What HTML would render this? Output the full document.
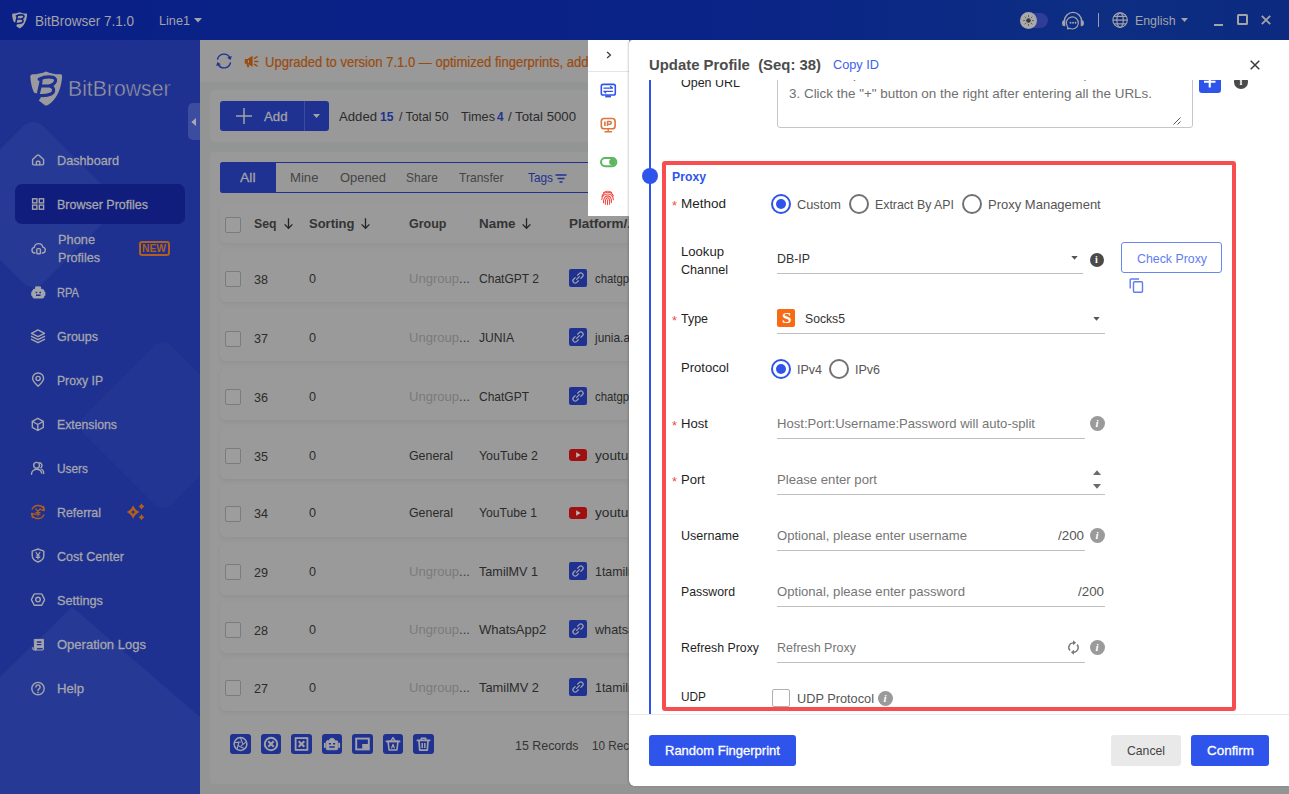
<!DOCTYPE html>
<html lang="en"><head><meta charset="utf-8"><title>BitBrowser</title>
<style>

*{box-sizing:border-box;margin:0;padding:0}
html,body{width:1289px;height:794px;overflow:hidden;background:#939494}
body{font-family:"Liberation Sans",sans-serif;font-size:13px;color:#333}
#app{position:relative;width:1289px;height:794px;overflow:hidden;background:#939494}
.a{position:absolute}
.t{position:absolute;white-space:nowrap;transform-origin:0 50%}
.layer{position:absolute;left:0;top:0;width:0;height:0}
.layer-main{z-index:1}
.layer-top{z-index:9}
.layer-drawer{z-index:5}
svg{position:absolute;overflow:visible}
.sb{-webkit-text-stroke:0.3px currentColor}
.row{position:absolute;left:220px;width:420px;height:52px;background:#9a9a9a;border-radius:6px;box-shadow:0 2px 4px rgba(0,0,0,.05)}
.cb{position:absolute;left:225px;width:16px;height:16px;border:1px solid #7b7b7b;border-radius:2px;background:#9d9d9d}
.pi{position:absolute;left:569px;width:18px;height:18px;border-radius:2px;background:#1f3292}
.tb{position:absolute;top:734px;width:21px;height:20px;border-radius:3px;background:#1f3292}
.ul{position:absolute;height:1px;background:#c0c0c0;left:777px}
.radio{position:absolute;width:20px;height:20px;border-radius:50%;border:2px solid #727272;background:#fff}
.radio.on{border-color:#2f54eb}
.radio.on:after{content:"";position:absolute;left:3px;top:3px;width:10px;height:10px;border-radius:50%;background:#2f54eb}
.info{position:absolute;width:14px;height:14px;border-radius:50%;background:#4a4a4a;color:#fff;font:bold 10px/14px "Liberation Serif",serif;text-align:center}
.info.lt{background:#9a9a9a;font-style:italic;width:15px;height:15px;line-height:15px;font-size:11px;margin:-.5px 0 0 -.5px}
.btn{position:absolute;border-radius:3px;background:#2f54eb}

</style></head>
<body>
<div id="app">

<!-- ===== title bar ===== -->
<div class="a" style="left:0;top:0;width:1289px;height:40px;background:linear-gradient(90deg,#0a2086 0%,#0a2387 55%,#0d2e83 85%,#0b2a80 100%);z-index:8"></div>
<svg viewBox="0 0 33 35" width="15.5" height="16.5" style="left:12px;top:11.5px;z-index:9"><path d="M2.400 3.200 C7 3.200 12 2.300 16.200 .4 C20.500 2.300 26 3.700 30.400 3.300 Q32.300 3.200 32.100 5.200 C31.800 12 30 20 25.600 26.600 C23.200 30 20.200 33 17.400 34.300 Q16 34.900 14.600 34 L8.800 29.600 L11 26.400 L4.400 22 C2.200 18.500 .6 12 .3 5.600 Q.2 3.300 2.400 3.200 Z" fill="#a0a0a4"/><path d="M9.200 8.200 C13 6.400 19 5.600 23 6.400 C27.400 7.600 26 13.200 19.400 14.800 C24.400 15.600 25 21.200 21 23 C17 24.800 9 24.600 3.600 23.300 M10.800 8.600 C11.400 10 11 11.400 10.600 12.800 L8.600 21.600 M10.200 15 L19.400 14.800" fill="none" stroke="#0a2086" stroke-width="3.4" stroke-linejoin="round" stroke-linecap="round"/></svg>
<svg viewBox="0 0 8 5" width="8" height="5" style="left:194px;top:18px;z-index:9"><path d="M0 0 H8 L4 4.6 Z" fill="#a3a3a8"/></svg>
<!-- toggle -->
<div class="a" style="left:1022px;top:12.5px;width:26px;height:15px;border-radius:8px;background:#2e3d95;z-index:9"></div>
<div class="a" style="left:1020px;top:11.5px;width:17px;height:17px;border-radius:50%;background:#a9a9a9;z-index:9"></div>
<svg viewBox="0 0 17 17" width="17" height="17" style="left:1020px;top:11.5px;z-index:9"><circle cx="8.5" cy="8.5" r="2.3" fill="#3a3a3a"/><g stroke="#5a5a5a" stroke-width="1" stroke-linecap="round"><path d="M8.5 3.6 v1 M8.5 12.4 v1 M3.6 8.5 h1 M12.4 8.5 h1 M5 5 l.7 .7 M11.3 11.3 l.7 .7 M12 5 l-.7 .7 M5.7 11.3 l-.7 .7"/></g></svg>
<!-- headset -->
<svg viewBox="0 0 24 20" width="24" height="20" style="left:1061px;top:10px;z-index:9"><g fill="none" stroke="#a3a3a8" stroke-width="1.4" stroke-linecap="round" stroke-linejoin="round"><path d="M3.4 11 a8.6 8.6 0 0 1 17.2 0"/><path d="M3.6 10.600 a1.800 1.800 0 0 0 -1.800 1.800 v1.400 a1.800 1.800 0 0 0 1.800 1.800 Z M20.400 10.600 a1.800 1.800 0 0 1 1.800 1.800 v1.400 a1.800 1.800 0 0 1 -1.800 1.800 Z" fill="#a3a3a8"/><path d="M7 17.8 l-.6 1 l2.2 -.5 a6 6 0 1 0 -2.400 -2.2 Z" stroke-width="1.2"/></g><g fill="#a3a3a8"><circle cx="9.500" cy="12.800" r=".95"/><circle cx="12" cy="12.800" r=".95"/><circle cx="14.500" cy="12.800" r=".95"/></g></svg>
<div class="a" style="left:1098px;top:13px;width:1px;height:14px;background:#9a9ca6;z-index:9"></div>
<!-- globe -->
<svg viewBox="0 0 17 17" width="16.200" height="16.200" style="left:1111.800px;top:11.900px;z-index:9"><g fill="none" stroke="#a3a3a8" stroke-width="1.2"><circle cx="8.5" cy="8.5" r="7.6"/><ellipse cx="8.5" cy="8.5" rx="3.4" ry="7.6"/><path d="M1 8.500 h15 M2.200 4.600 h12.600 M2.200 12.400 h12.600"/></g></svg>
<svg viewBox="0 0 8 5" width="7" height="4.5" style="left:1180.5px;top:18px;z-index:9"><path d="M0 0 H8 L4 4.6 Z" fill="#a3a3a8"/></svg>
<!-- window controls -->
<div class="a" style="left:1214px;top:24px;width:9px;height:2px;background:#a3a3a8;z-index:9"></div>
<div class="a" style="left:1236.500px;top:14px;width:11px;height:11px;border:2px solid #a3a3a8;border-radius:1.5px;z-index:9"></div>
<svg viewBox="0 0 10 10" width="10" height="10" style="left:1261px;top:15px;z-index:9"><path d="M.8 .8 L9.200 9.200 M9.200 .8 L.8 9.200" stroke="#a3a3a8" stroke-width="1.8" fill="none"/></svg>

<!-- ===== sidebar ===== -->
<div class="a" style="left:0;top:40px;width:200px;height:754px;background:#1e3191;overflow:hidden;z-index:0">
  <div class="a" style="left:-29px;top:102px;width:124.500px;height:124.500px;border-radius:14px;background:rgba(255,255,255,.04);transform:rotate(45deg)"></div>
  <div class="a" style="left:101px;top:323px;width:124px;height:124px;border-radius:12px;background:rgba(255,255,255,.025);transform:rotate(45deg)"></div>
  <svg viewBox="0 0 200 754" width="200" height="754" style="left:0;top:0"><path d="M72 567 L200 677 V754 H0 V637 Z" fill="rgba(255,255,255,.04)"/></svg>
  <div class="a" style="left:15px;top:144px;width:169.500px;height:39.500px;border-radius:7px;background:#101d7c"></div>
</div>
<!-- big logo -->
<svg viewBox="0 0 33 35" width="33" height="35" style="left:30px;top:70.5px;z-index:1"><path d="M2.400 3.200 C7 3.200 12 2.300 16.200 .4 C20.500 2.300 26 3.700 30.400 3.300 Q32.300 3.200 32.100 5.200 C31.800 12 30 20 25.600 26.600 C23.200 30 20.200 33 17.400 34.300 Q16 34.900 14.600 34 L8.800 29.600 L11 26.400 L4.400 22 C2.200 18.500 .6 12 .3 5.600 Q.2 3.300 2.400 3.200 Z" fill="#9b9b9f"/><path d="M9.200 8.200 C13 6.400 19 5.600 23 6.400 C27.400 7.600 26 13.200 19.400 14.800 C24.400 15.600 25 21.200 21 23 C17 24.800 9 24.600 3.600 23.300 M10.800 8.600 C11.400 10 11 11.400 10.600 12.800 L8.600 21.600 M10.200 15 L19.400 14.800" fill="none" stroke="#1e3191" stroke-width="3.2" stroke-linejoin="round" stroke-linecap="round"/></svg>
<!-- collapse handle -->
<div class="a" style="left:187.500px;top:103px;width:12.500px;height:36.500px;border-radius:5px 0 0 5px;background:#3c4c9f;z-index:1"></div>
<svg viewBox="0 0 5 8" width="5" height="8" style="left:191px;top:117.500px;z-index:2"><path d="M5 0 V8 L.4 4 Z" fill="#a9abb4"/></svg>
<svg viewBox="0 0 16 16" width="16" height="16" style="left:30.200px;top:152px;color:#a5a6ad;z-index:1"><g fill="none" stroke="currentColor" stroke-width="1.400" stroke-linecap="round" stroke-linejoin="round"><path d="M2.600 7.600 L7.200 3.300 Q8.100 2.500 9 3.300 L13.600 7.600 V11.800 Q13.600 12.850 12.500 12.850 H3.700 Q2.600 12.850 2.600 11.800 Z"/><path d="M6.400 12.800 V10.300 Q6.400 9.300 7.400 9.300 H8.800 Q9.800 9.300 9.800 10.300 V12.800"/></g></svg>
<svg viewBox="0 0 16 16" width="16" height="16" style="left:30.200px;top:196px;color:#a5a6ad;z-index:1"><g fill="none" stroke="currentColor" stroke-width="1.400" stroke-linecap="round" stroke-linejoin="round"><g stroke-linejoin="miter"><rect x="2.600" y="2.800" width="4.300" height="4.100"/><rect x="9.300" y="2.800" width="4.300" height="4.100"/><rect x="2.600" y="9.100" width="4.300" height="4.100"/><rect x="9.300" y="9.100" width="4.300" height="4.100"/></g></g></svg>
<svg viewBox="0 0 16 16" width="16" height="16" style="left:30.200px;top:240px;color:#a5a6ad;z-index:1"><g fill="none" stroke="currentColor" stroke-width="1.400" stroke-linecap="round" stroke-linejoin="round"><path d="M5 13 H4.800 a2.850 2.850 0 0 1 -.5 -5.650 a4.300 4.300 0 0 1 8.500 -.2 a2.950 2.950 0 0 1 -.3 5.850 H12.200"/><rect x="6.800" y="8.600" width="3.600" height="5.200" rx=".8"/></g></svg>
<svg viewBox="0 0 16 16" width="16" height="16" style="left:30.200px;top:284px;color:#a5a6ad;z-index:1"><g fill="none" stroke="currentColor" stroke-width="1.400" stroke-linecap="round" stroke-linejoin="round"><path d="M4.200 5.400 h8.200 a1.500 1.500 0 0 1 1.500 1.500 v5.600 a1.500 1.500 0 0 1 -1.500 1.500 h-8.200 a1.500 1.500 0 0 1 -1.500 -1.500 v-5.600 a1.500 1.500 0 0 1 1.500 -1.500 Z" fill="currentColor" stroke-width="1"/><path d="M6 2.900 h4.600 v2.400 h-4.600 Z" fill="currentColor" stroke-width="1"/><path d="M2 8.200 v3 M14.600 8.200 v3" stroke-width="1.500"/><path d="M5.600 8.500 h1.600 M9.400 8.500 h1.600 M6 11.300 h4.600" stroke="#1e3191" stroke-width="1.600" stroke-linecap="butt"/></g></svg>
<svg viewBox="0 0 16 16" width="16" height="16" style="left:30.200px;top:328px;color:#a5a6ad;z-index:1"><g fill="none" stroke="currentColor" stroke-width="1.400" stroke-linecap="round" stroke-linejoin="round"><path d="M8 1.900 L14.500 5.300 L8 8.700 L1.500 5.300 Z M1.500 8.300 L8 11.700 L14.500 8.300 M1.500 11.300 L8 14.700 L14.500 11.300"/></g></svg>
<svg viewBox="0 0 16 16" width="16" height="16" style="left:30.200px;top:372px;color:#a5a6ad;z-index:1"><g fill="none" stroke="currentColor" stroke-width="1.400" stroke-linecap="round" stroke-linejoin="round"><path d="M8.100 14.300 C4.600 10.900 2.600 8.900 2.600 6.500 a5.500 5.500 0 0 1 11 0 C13.600 8.900 11.600 10.900 8.100 14.300 Z"/><circle cx="8.100" cy="6.500" r="2.100"/></g></svg>
<svg viewBox="0 0 16 16" width="16" height="16" style="left:30.200px;top:416px;color:#a5a6ad;z-index:1"><g fill="none" stroke="currentColor" stroke-width="1.400" stroke-linecap="round" stroke-linejoin="round"><path d="M7.800 2.300 L13.300 5.400 V11.400 L7.800 14.500 L2.300 11.400 V5.400 Z M2.500 5.500 L7.800 8.500 L13.100 5.500 M7.800 8.500 V14.300"/></g></svg>
<svg viewBox="0 0 16 16" width="16" height="16" style="left:30.200px;top:460px;color:#a5a6ad;z-index:1"><g fill="none" stroke="currentColor" stroke-width="1.400" stroke-linecap="round" stroke-linejoin="round"><circle cx="6.600" cy="5.300" r="2.900"/><path d="M1.500 14.200 a5.200 5.200 0 0 1 10.200 -1.100 M9.800 2.700 a2.900 2.900 0 0 1 1.100 5.100 M11.700 9.300 a4.800 4.800 0 0 1 2 4.200"/></g></svg>
<svg viewBox="0 0 16 16" width="16" height="16" style="left:30.200px;top:504px;color:#b05f1e;z-index:1"><g fill="none" stroke="currentColor" stroke-width="1.400" stroke-linecap="round" stroke-linejoin="round"><path d="M14.300 6.400 A6.500 6.500 0 0 0 2.200 5 M1.700 9.600 A6.500 6.500 0 0 0 13.800 11" stroke-width="1.400"/><path d="M13.600 2.400 L14.400 6.600 L10.600 5.600 M2.400 13.600 L1.600 9.400 L5.400 10.400" stroke-width="1.200"/><path d="M5.900 4.800 L8 7.700 L10.100 4.800 M8 7.700 V11.700 M6 8.500 h4 M6 10.200 h4" stroke-width="1.200"/></g></svg>
<svg viewBox="0 0 16 16" width="16" height="16" style="left:30.200px;top:548px;color:#a5a6ad;z-index:1"><g fill="none" stroke="currentColor" stroke-width="1.400" stroke-linecap="round" stroke-linejoin="round"><path d="M8 1 L13.800 3.100 V7.600 C13.800 10.800 11.200 13 8 14 C4.800 13 2.200 10.800 2.200 7.600 V3.100 Z"/><path d="M6.100 4.500 L8 7.300 L9.900 4.500 M8 7.300 V11 M6.300 8 h3.400 M6.300 9.500 h3.400" stroke-width="1.200"/></g></svg>
<svg viewBox="0 0 16 16" width="16" height="16" style="left:30.200px;top:592px;color:#a5a6ad;z-index:1"><g fill="none" stroke="currentColor" stroke-width="1.400" stroke-linecap="round" stroke-linejoin="round"><path d="M4.900 1.900 H11.100 Q11.700 1.900 12 2.400 L14.400 7.100 Q14.600 7.600 14.400 8.100 L12 12.800 Q11.700 13.300 11.100 13.300 H4.900 Q4.300 13.300 4 12.800 L1.600 8.100 Q1.400 7.600 1.600 7.100 L4 2.400 Q4.300 1.900 4.900 1.900 Z"/><circle cx="8" cy="7.600" r="2.300"/></g></svg>
<svg viewBox="0 0 16 16" width="16" height="16" style="left:30.200px;top:636px;color:#a5a6ad;z-index:1"><g fill="none" stroke="currentColor" stroke-width="1.400" stroke-linecap="round" stroke-linejoin="round"><path d="M4.600 3.400 H13.400 V11.400 H6.600 V12.800 Q6.600 14 5.600 14 Q4.600 14 4.600 12.800 Z" fill="currentColor" stroke-width="1"/><path d="M2.900 11.600 V12.600 a1.400 1.400 0 0 0 1.400 1.400 H12 a1.400 1.400 0 0 0 1.400 -1.400 V11.400" stroke-width="1.200"/><path d="M6.800 6 h4.600 M6.800 8.600 h4.600" stroke="#1e3191" stroke-width="1.300" stroke-linecap="butt"/></g></svg>
<svg viewBox="0 0 16 16" width="16" height="16" style="left:30.200px;top:680px;color:#a5a6ad;z-index:1"><g fill="none" stroke="currentColor" stroke-width="1.400" stroke-linecap="round" stroke-linejoin="round"><circle cx="8" cy="8.600" r="6.200"/><path d="M5.900 7 a2.100 2.100 0 1 1 3.200 1.800 C8.300 9.300 8 9.700 8 10.400" stroke-width="1.400"/><path d="M8 12.300 v.3" stroke-width="1.500"/></g></svg>

<!-- NEW badge -->
<div class="a" style="left:138.500px;top:240.500px;width:31px;height:15px;border:2px solid #b05f1e;border-radius:3px;z-index:1"></div>
<!-- referral sparkle -->
<svg viewBox="0 0 20 20" width="20" height="20" style="left:125px;top:502px;z-index:1"><g fill="#b05f1e"><path d="M8.1 3.3 Q10 8.2 14.5 10.1 Q10 12 8.1 16.9 Q6.2 12 1.7 10.1 Q6.2 8.2 8.1 3.3 Z"/><path d="M16.5 1.3 Q17.3 3.7 19.5 4.5 Q17.3 5.3 16.5 7.7 Q15.7 5.3 13.5 4.5 Q15.7 3.7 16.5 1.3 Z"/><path d="M16.5 12 Q17.3 14.4 19.5 15.2 Q17.3 16 16.5 18.4 Q15.7 16 13.5 15.2 Q15.7 14.4 16.5 12 Z"/></g><circle cx="8.100" cy="10.100" r="1.500" fill="#1e3191"/></svg>

<!-- ===== main (dimmed) ===== -->
<div class="a" style="left:200px;top:40px;width:1089px;height:754px;background:#939494;z-index:0"></div>
<div class="a" style="left:200px;top:40px;width:1089px;height:41.500px;background:#999;z-index:0"></div>
<div class="a" style="left:210px;top:90px;width:1079px;height:52px;background:#999;border-radius:4px;z-index:0"></div>
<div class="a" style="left:210px;top:152px;width:1079px;height:632px;background:#999;border-radius:4px;z-index:0"></div>
<!-- refresh icon -->
<svg viewBox="0 0 18 18" width="18" height="18" style="left:215px;top:52px;z-index:1"><g fill="none" stroke="#1f3292" stroke-width="1.400" stroke-linecap="round"><path d="M2.600 7 A6.600 6.600 0 0 1 14.800 5.600"/><path d="M15.400 11 A6.600 6.600 0 0 1 3.200 12.400"/></g><path d="M16.800 4 L15.600 8 L12.200 5.800 Z M1.200 14 L2.400 10 L5.800 12.200 Z" fill="#1f3292"/></svg>
<!-- megaphone -->
<svg viewBox="0 0 15 13" width="15" height="13" style="left:244px;top:54.500px;z-index:1"><path d="M.8 4 h2.800 L8 1 Q8.600 .7 8.600 1.400 V11.200 Q8.600 11.900 8 11.600 L3.600 8.800 H.8 Z" fill="#9a4b0e"/><path d="M2.400 8.600 l.9 3.600 h1.900 l-.8 -3.600 Z" fill="#9a4b0e"/><path d="M4.400 5 v3" stroke="#999" stroke-width="1"/><path d="M10.800 6.400 h3 M10.500 3.400 l2.500 -1.500 M10.500 9.400 l2.500 1.500" stroke="#9a4b0e" stroke-width="1.500" stroke-linecap="round"/></svg>
<!-- add button -->
<div class="a" style="left:220px;top:101px;width:84px;height:30px;border-radius:3px 0 0 3px;background:#1f3292;z-index:1"></div>
<div class="a" style="left:304.500px;top:101px;width:24.500px;height:30px;border-radius:0 3px 3px 0;background:#1f3292;z-index:1"></div>
<div class="a" style="left:304px;top:101px;width:1px;height:30px;background:#3b4c9e;z-index:1"></div>
<svg viewBox="0 0 16 16" width="16" height="16" style="left:235.500px;top:108px;z-index:2"><path d="M8 0 V16 M0 8 H16" stroke="#a2a2a6" stroke-width="1.500"/></svg>
<svg viewBox="0 0 8 5" width="7" height="4.500" style="left:312.500px;top:114px;z-index:2"><path d="M0 0 H8 L4 4.600 Z" fill="#a2a2a6"/></svg>
<!-- tabs -->
<div class="a" style="left:220px;top:162px;width:1069px;height:31px;border:1px solid #1f3292;border-radius:3px 0 0 3px;z-index:1"></div>
<div class="a" style="left:220px;top:162px;width:55.500px;height:31px;border-radius:3px 0 0 3px;background:#1f3292;z-index:1"></div>
<svg viewBox="0 0 12 9" width="12" height="9" style="left:555px;top:173.500px;z-index:1"><path d="M.5 1 H11.500 M2.500 4.500 H9.500 M4.500 8 H7.500" stroke="#1f3292" stroke-width="1.300" fill="none"/></svg>
<!-- table header -->
<div class="a" style="left:220px;top:203px;width:420px;height:40px;background:#9a9a9a;border-radius:6px;box-shadow:0 2px 4px rgba(0,0,0,.045);z-index:1"></div>
<div class="cb" style="top:217px;z-index:1"></div>
<svg viewBox="0 0 9 11" width="9" height="11" style="left:283.5px;top:217.500px;z-index:2"><path d="M4.500 .3 V10.200 M.6 6.400 L4.500 10.300 L8.400 6.400" fill="none" stroke="#262626" stroke-width="1.300"/></svg>
<svg viewBox="0 0 9 11" width="9" height="11" style="left:361px;top:217.500px;z-index:2"><path d="M4.500 .3 V10.200 M.6 6.400 L4.500 10.300 L8.400 6.400" fill="none" stroke="#262626" stroke-width="1.300"/></svg>
<svg viewBox="0 0 9 11" width="9" height="11" style="left:521.5px;top:217.500px;z-index:2"><path d="M4.500 .3 V10.200 M.6 6.400 L4.500 10.300 L8.400 6.400" fill="none" stroke="#262626" stroke-width="1.300"/></svg>

<div class="a" style="left:0;top:0;z-index:1">
<div class="row" style="top:249.8px"></div>
<div class="cb" style="top:271.3px"></div>
<div class="row" style="top:309px"></div>
<div class="cb" style="top:330.5px"></div>
<div class="row" style="top:367.9px"></div>
<div class="cb" style="top:389.4px"></div>
<div class="row" style="top:426.8px"></div>
<div class="cb" style="top:448.3px"></div>
<div class="row" style="top:484.5px"></div>
<div class="cb" style="top:506px"></div>
<div class="row" style="top:542.6px"></div>
<div class="cb" style="top:564.1px"></div>
<div class="row" style="top:600.7px"></div>
<div class="cb" style="top:622.2px"></div>
<div class="row" style="top:658.8px"></div>
<div class="cb" style="top:680.3px"></div>
<div class="pi" style="top:268.8px"><svg viewBox="0 0 18 18" width="18" height="18" style="left:0;top:0"><g fill="none" stroke="#a2a2a6" stroke-width="1.25" stroke-linecap="round"><path d="M7.6 10.4 L10.4 7.6"/><path d="M8.6 6.2 L10.2 4.6 a2.2 2.2 0 0 1 3.2 3.2 L11.8 9.4"/><path d="M9.4 11.8 L7.8 13.4 a2.2 2.2 0 0 1 -3.2 -3.2 L6.2 8.6"/></g></svg></div>
<div class="pi" style="top:328px"><svg viewBox="0 0 18 18" width="18" height="18" style="left:0;top:0"><g fill="none" stroke="#a2a2a6" stroke-width="1.25" stroke-linecap="round"><path d="M7.6 10.4 L10.4 7.6"/><path d="M8.6 6.2 L10.2 4.6 a2.2 2.2 0 0 1 3.2 3.2 L11.8 9.4"/><path d="M9.4 11.8 L7.8 13.4 a2.2 2.2 0 0 1 -3.2 -3.2 L6.2 8.6"/></g></svg></div>
<div class="pi" style="top:386.9px"><svg viewBox="0 0 18 18" width="18" height="18" style="left:0;top:0"><g fill="none" stroke="#a2a2a6" stroke-width="1.25" stroke-linecap="round"><path d="M7.6 10.4 L10.4 7.6"/><path d="M8.6 6.2 L10.2 4.6 a2.2 2.2 0 0 1 3.2 3.2 L11.8 9.4"/><path d="M9.4 11.8 L7.8 13.4 a2.2 2.2 0 0 1 -3.2 -3.2 L6.2 8.6"/></g></svg></div>
<div class="a" style="left:569px;top:448.8px;width:18px;height:12.5px;border-radius:3px;background:#a01010"><svg viewBox="0 0 18 12" width="18" height="12" style="left:0;top:0"><path d="M7.2 3.2 L11.6 6 L7.2 8.8 Z" fill="#b9b9b9"/></svg></div>
<div class="a" style="left:569px;top:506.5px;width:18px;height:12.5px;border-radius:3px;background:#a01010"><svg viewBox="0 0 18 12" width="18" height="12" style="left:0;top:0"><path d="M7.2 3.2 L11.6 6 L7.2 8.8 Z" fill="#b9b9b9"/></svg></div>
<div class="pi" style="top:561.6px"><svg viewBox="0 0 18 18" width="18" height="18" style="left:0;top:0"><g fill="none" stroke="#a2a2a6" stroke-width="1.25" stroke-linecap="round"><path d="M7.6 10.4 L10.4 7.6"/><path d="M8.6 6.2 L10.2 4.6 a2.2 2.2 0 0 1 3.2 3.2 L11.8 9.4"/><path d="M9.4 11.8 L7.8 13.4 a2.2 2.2 0 0 1 -3.2 -3.2 L6.2 8.6"/></g></svg></div>
<div class="pi" style="top:619.7px"><svg viewBox="0 0 18 18" width="18" height="18" style="left:0;top:0"><g fill="none" stroke="#a2a2a6" stroke-width="1.25" stroke-linecap="round"><path d="M7.6 10.4 L10.4 7.6"/><path d="M8.6 6.2 L10.2 4.6 a2.2 2.2 0 0 1 3.2 3.2 L11.8 9.4"/><path d="M9.4 11.8 L7.8 13.4 a2.2 2.2 0 0 1 -3.2 -3.2 L6.2 8.6"/></g></svg></div>
<div class="pi" style="top:677.8px"><svg viewBox="0 0 18 18" width="18" height="18" style="left:0;top:0"><g fill="none" stroke="#a2a2a6" stroke-width="1.25" stroke-linecap="round"><path d="M7.6 10.4 L10.4 7.6"/><path d="M8.6 6.2 L10.2 4.6 a2.2 2.2 0 0 1 3.2 3.2 L11.8 9.4"/><path d="M9.4 11.8 L7.8 13.4 a2.2 2.2 0 0 1 -3.2 -3.2 L6.2 8.6"/></g></svg></div>
<div class="tb" style="left:230px;width:21px"><svg viewBox="0 0 21 20" width="21" height="20" style="left:0;top:0"><g fill="none" stroke="#a2a2a6" stroke-width="1.500" stroke-linecap="round" stroke-linejoin="round"><circle cx="10.500" cy="10" r="6.400"/><path d="M10.500 3.600 L12.600 9.400 M16.500 7.600 L11.400 11.600 M14.600 14.800 L8.800 12 M7 15.200 L8.600 9.200 M4.300 8.600 L10.400 8"  stroke-width="1.200"/></g></svg></div>
<div class="tb" style="left:260.5px;width:20px"><svg viewBox="0 0 20 20" width="20" height="20" style="left:0;top:0"><g fill="none" stroke="#a2a2a6" stroke-width="1.500" stroke-linecap="round" stroke-linejoin="round"><circle cx="10" cy="10" r="6.200" stroke-width="2"/><path d="M7.300 7.300 L12.700 12.700 M12.700 7.300 L7.300 12.700" stroke-width="2.200" stroke-linecap="butt"/></g></svg></div>
<div class="tb" style="left:291px;width:21px"><svg viewBox="0 0 21 20" width="21" height="20" style="left:0;top:0"><g fill="none" stroke="#a2a2a6" stroke-width="1.500" stroke-linecap="round" stroke-linejoin="round"><rect x="4.600" y="4.100" width="11.800" height="11.800" stroke-width="1.800" stroke-linejoin="miter"/><path d="M7.700 7.200 L13.300 12.800 M13.300 7.200 L7.700 12.800" stroke-width="2.100" stroke-linecap="butt"/></g></svg></div>
<div class="tb" style="left:321.5px;width:20px"><svg viewBox="0 0 20 20" width="20" height="20" style="left:0;top:0"><g fill="none" stroke="#a2a2a6" stroke-width="1.500" stroke-linecap="round" stroke-linejoin="round"><path d="M5.400 6.800 h9.200 a1.200 1.200 0 0 1 1.200 1.200 v6.600 a1.200 1.200 0 0 1 -1.200 1.200 h-9.200 a1.200 1.200 0 0 1 -1.200 -1.200 v-6.600 a1.200 1.200 0 0 1 1.200 -1.200 Z" fill="#a2a2a6" stroke-width=".8"/><path d="M7.200 7 a2.800 2.800 0 0 1 5.600 0 Z" fill="#a2a2a6" stroke-width=".8"/><path d="M2.800 9.600 v3.400 M17.200 9.600 v3.400" stroke-width="1.800"/><path d="M6.800 9.800 h2.200 M11 9.800 h2.200 M7.200 13 h5.600" stroke="#1f3292" stroke-width="1.500" stroke-linecap="butt"/></g></svg></div>
<div class="tb" style="left:352px;width:21px"><svg viewBox="0 0 21 20" width="21" height="20" style="left:0;top:0"><g fill="none" stroke="#a2a2a6" stroke-width="1.500" stroke-linecap="round" stroke-linejoin="round"><rect x="4.200" y="4.600" width="12.600" height="10.800" stroke-width="1.900" stroke-linejoin="miter"/><rect x="10.200" y="10" width="6" height="4.800" fill="#a2a2a6" stroke="none"/></g></svg></div>
<div class="tb" style="left:382.5px;width:20px"><svg viewBox="0 0 20 20" width="20" height="20" style="left:0;top:0"><g fill="none" stroke="#a2a2a6" stroke-width="1.500" stroke-linecap="round" stroke-linejoin="round"><path d="M5 7.400 h10 l-1.100 8.600 h-7.800 Z" stroke-width="1.600"/><path d="M3.400 7.400 h13.200" stroke-width="1.700"/><path d="M7.600 7.400 L10 3.600 L12.400 7.400" stroke-width="1.400"/><path d="M8.600 14 L10 10.200 L11.400 14 M9.100 12.800 h1.800" stroke-width="1.100"/></g></svg></div>
<div class="tb" style="left:413px;width:21px"><svg viewBox="0 0 21 20" width="21" height="20" style="left:0;top:0"><g fill="none" stroke="#a2a2a6" stroke-width="1.500" stroke-linecap="round" stroke-linejoin="round"><path d="M4.400 6.400 h12.200" stroke-width="1.800"/><path d="M8.300 6.200 v-2 h4.400 v2" stroke-width="1.500"/><path d="M6 6.600 l.7 9.600 h7.600 l.7 -9.600" stroke-width="1.700"/><path d="M9.200 9 v5 M11.800 9 v5" stroke-width="1.500" stroke-linecap="butt"/></g></svg></div>

</div>

<!-- ===== floating tool panel ===== -->
<div class="a" style="left:588px;top:40px;width:40.500px;height:176px;background:#fff;z-index:3"></div>
<div class="a" style="left:588px;top:70.500px;width:40.500px;height:1px;background:#e4e4e4;z-index:3"></div>
<svg viewBox="0 0 8 10" width="6" height="8" style="left:605.500px;top:51px;z-index:4"><path d="M1.500 1 L6 5 L1.500 9" fill="none" stroke="#333" stroke-width="1.500"/></svg>
<svg viewBox="0 0 17 15" width="17" height="15" style="left:600px;top:82.500px;z-index:4"><rect x="1.300" y="1.400" width="14" height="10.600" rx="1.800" fill="none" stroke="#2f54eb" stroke-width="1.600"/><path d="M5.200 12.400 h5.800 v2 h-5.800 Z" fill="#2f54eb"/><path d="M3.900 5.100 h8.600 M10.600 3.500 l1.900 1.600 M12.500 8.300 h-8.600 M5.800 9.900 l-1.900 -1.600" fill="none" stroke="#2f54eb" stroke-width="1.300" stroke-linecap="round"/></svg>
<svg viewBox="0 0 17 16" width="17" height="16" style="left:600px;top:117.200px;z-index:4"><g fill="none" stroke="#da763f" stroke-linejoin="round"><rect x="1.300" y="1.500" width="13.800" height="10.200" rx="2.800" stroke-width="1.600"/><path d="M8.200 11.800 v2.600 M5 14.700 h6.500" stroke-width="1.400" stroke-linecap="round"/><path d="M4.900 4.400 v4.600" stroke-width="1.600"/><path d="M7.500 9 V4.400 h2.300 a1.450 1.450 0 0 1 0 2.900 h-2.300" stroke-width="1.500"/></g></svg>
<svg viewBox="0 0 17.400 10.200" width="17.400" height="10.200" style="left:599.500px;top:156.600px;z-index:4"><rect x="1" y="1" width="15.400" height="8.200" rx="4.100" fill="none" stroke="#5db761" stroke-width="2"/><circle cx="12.500" cy="5.100" r="3.300" fill="#5db761"/></svg>
<svg viewBox="0 0 16 16" width="15.500" height="16" style="left:600.400px;top:189.800px;z-index:4"><g fill="none" stroke="#f2453d" stroke-width="1.100" stroke-linecap="round"><path d="M2 6.500 A6.300 6.300 0 0 1 13.800 5.800"/><path d="M1.800 9.500 C2.200 5.500 4.800 3.800 8 3.800 C11.200 3.800 13.600 6 13.800 9.800"/><path d="M3.600 13 C3.400 9 4.800 5.800 8 5.800 C11 5.800 12 8.500 11.800 12.500"/><path d="M5.600 14.500 C5.200 11 5.800 7.800 8 7.800 C10 7.800 10.200 11 9.800 14.500"/><path d="M7.800 15 C7.600 13 7.600 11 8 9.800"/><path d="M3.500 2.800 A6.500 6.500 0 0 1 12 2.400"/></g></svg>

<!-- ===== drawer ===== -->
<div class="a" style="left:629px;top:40px;width:660px;height:746px;background:#fff;border-radius:4px 0 0 6px;box-shadow:-1px 0 2px rgba(0,0,0,.18);z-index:4"></div>
<!-- scroll content (clipped 80..714) -->
<div class="a" style="left:629px;top:80px;width:660px;height:634px;overflow:hidden;z-index:5">
 <div class="a" style="left:-629px;top:-80px;width:1289px;height:794px">
  <div class="a" style="left:649px;top:60px;width:2px;height:700px;background:#2f54eb"></div>
  <div class="a" style="left:642px;top:168px;width:16px;height:16px;border-radius:50%;background:#2f54eb"></div>
  <!-- textarea -->
  <div class="a" style="left:776.500px;top:40px;width:416.500px;height:87.500px;border:1px solid #c6c6c6;border-radius:3px;background:#fff"></div>
  <svg viewBox="0 0 8 8" width="8" height="8" style="left:1173px;top:117px"><path d="M7.500 .5 L.5 7.500 M7.500 4.500 L4.500 7.500" stroke="#555" stroke-width="1" fill="none"/></svg>
  <div class="btn" style="left:1199px;top:70px;width:22px;height:23px"></div>
  <svg viewBox="0 0 12 12" width="11.500" height="11.500" style="left:1204px;top:76px"><path d="M6 0 V12 M0 6 H12" stroke="#fff" stroke-width="2.200"/></svg>
  <div class="info" style="left:1234px;top:74.5px">i</div>

  <!-- red highlight box -->
  <div class="a" style="left:662px;top:161px;width:574px;height:549.500px;border:4px solid #f84d4f;border-radius:3px"></div>
  <!-- method radios -->
  <div class="radio on" style="left:771px;top:194px"></div>
  <div class="radio" style="left:849px;top:194px"></div>
  <div class="radio" style="left:962px;top:194px"></div>
  <!-- lookup channel -->
  <div class="ul" style="top:273px;width:306px"></div>
  <svg viewBox="0 0 8 5" width="7" height="4" style="left:1070.500px;top:256px"><path d="M0 0 H8 L4 4.600 Z" fill="#555"/></svg>
  <div class="info" style="left:1089.5px;top:253px">i</div>

  <div class="a" style="left:1121px;top:242px;width:101px;height:31px;border:1px solid #6a86f1;border-radius:3px;background:#fff"></div>
  <svg viewBox="0 0 15 15" width="15" height="15" style="left:1128.500px;top:277.500px"><g fill="none" stroke="#5f7df0" stroke-width="1.400" stroke-linejoin="round"><rect x="4.500" y="3.800" width="9" height="10.500" rx="1"/><path d="M1.200 10.500 V2 a1 1 0 0 1 1 -1 H10"/></g></svg>
  <!-- type -->
  <div class="a" style="left:777px;top:309px;width:18px;height:18px;border-radius:2px;background:#f76b14"></div>
  <div class="ul" style="top:333px;width:328px"></div>
  <svg viewBox="0 0 8 5" width="7" height="4" style="left:1092.500px;top:316.500px"><path d="M0 0 H8 L4 4.600 Z" fill="#555"/></svg>
  <!-- protocol radios -->
  <div class="radio on" style="left:771px;top:359px"></div>
  <div class="radio" style="left:829px;top:359px"></div>
  <!-- host -->
  <div class="ul" style="top:438px;width:308px"></div>
  <div class="info lt" style="left:1090px;top:416px">i</div>

  <!-- port -->
  <div class="ul" style="top:494px;width:328px"></div>
  <svg viewBox="0 0 8 5" width="8" height="5" style="left:1093px;top:469.500px"><path d="M0 5 H8 L4 .2 Z" fill="#6a6a6a"/></svg>
  <svg viewBox="0 0 8 5" width="8" height="5" style="left:1093px;top:483.500px"><path d="M0 0 H8 L4 4.800 Z" fill="#6a6a6a"/></svg>
  <!-- username -->
  <div class="ul" style="top:550px;width:308px"></div>
  <div class="info lt" style="left:1090px;top:528px">i</div>

  <!-- password -->
  <div class="ul" style="top:606px;width:328px"></div>
  <!-- refresh proxy -->
  <div class="ul" style="top:662px;width:308px"></div>
  <svg viewBox="0 0 14 16" width="13" height="15" style="left:1066.500px;top:639.500px"><g fill="none" stroke="#777" stroke-width="1.500"><path d="M7 3 A5 5 0 0 0 3.200 11.300"/><path d="M7 13 A5 5 0 0 0 10.800 4.700"/></g><path d="M6.500 .3 L9.800 3 L6.500 5.700 Z M7.500 10.300 L4.200 13 L7.500 15.700 Z" fill="#777"/></svg>
  <div class="info lt" style="left:1090px;top:640px">i</div>

  <!-- udp -->
  <div class="a" style="left:772px;top:689px;width:18px;height:18px;border:1px solid #b0b0b0;border-radius:2px;background:#fff"></div>
  <div class="info lt" style="left:878px;top:691px">i</div>

 </div>
</div>
<!-- header/footer covers (clip the scroll area) -->
<div class="a" style="left:633px;top:40px;width:656px;height:40px;background:#fff;z-index:6"></div>
<div class="a" style="left:629px;top:44px;width:10px;height:36px;background:#fff;z-index:6"></div>
<div class="a" style="left:633px;top:714px;width:656px;height:71.500px;background:#fff;z-index:6"></div>
<div class="a" style="left:629px;top:714px;width:10px;height:66px;background:#fff;z-index:6"></div>
<!-- header close -->
<svg viewBox="0 0 10 10" width="10" height="10" style="left:1249.500px;top:60px;z-index:6"><path d="M.7 .7 L9.300 9.300 M9.300 .7 L.7 9.300" stroke="#3a3a3a" stroke-width="1.500" fill="none"/></svg>
<!-- footer -->
<div class="a" style="left:629px;top:714px;width:660px;height:1px;background:#e9e9e9;z-index:6"></div>
<div class="btn" style="left:649px;top:735px;width:147px;height:31px;z-index:6"></div>
<div class="btn" style="left:1111px;top:735px;width:70px;height:31px;background:#e9e9e9;z-index:6"></div>
<div class="btn" style="left:1191px;top:735px;width:78px;height:31px;z-index:6"></div>
<div class="layer layer-main">
<span class="t" id="t3" style="left:67.8px;top:74px;font-size:21.6px;line-height:30px;color:#9b9b9f;-webkit-text-stroke:.45px #1e3191;transform:scaleX(0.9827);">BitBrowser</span>
<span class="t" id="t4" style="left:57px;top:150.7px;font-size:13px;line-height:20px;color:#a5a6ad;-webkit-text-stroke:.3px #a5a6ad;transform:scaleX(0.9747);">Dashboard</span>
<span class="t" id="t5" style="left:57px;top:194.7px;font-size:13px;line-height:20px;color:#a5a6ad;-webkit-text-stroke:.3px #a5a6ad;transform:scaleX(0.9615);">Browser Profiles</span>
<span class="t" id="t6" style="left:58px;top:230.2px;font-size:13px;line-height:20px;color:#a5a6ad;-webkit-text-stroke:.3px #a5a6ad;transform:scaleX(0.9842);">Phone</span>
<span class="t" id="t7" style="left:58px;top:248.2px;font-size:13px;line-height:20px;color:#a5a6ad;-webkit-text-stroke:.3px #a5a6ad;transform:scaleX(0.9686);">Profiles</span>
<span class="t" id="t8" style="left:142px;top:238.7px;font-size:10px;line-height:20px;color:#b05f1e;font-weight:bold;transform:scaleX(1.0281);">NEW</span>
<span class="t" id="t9" style="left:57px;top:282.7px;font-size:13px;line-height:20px;color:#a5a6ad;-webkit-text-stroke:.3px #a5a6ad;transform:scaleX(0.8539);">RPA</span>
<span class="t" id="t10" style="left:57px;top:326.7px;font-size:13px;line-height:20px;color:#a5a6ad;-webkit-text-stroke:.3px #a5a6ad;transform:scaleX(0.9615);">Groups</span>
<span class="t" id="t11" style="left:57px;top:370.7px;font-size:13px;line-height:20px;color:#a5a6ad;-webkit-text-stroke:.3px #a5a6ad;transform:scaleX(0.9364);">Proxy IP</span>
<span class="t" id="t12" style="left:57px;top:414.7px;font-size:13px;line-height:20px;color:#a5a6ad;-webkit-text-stroke:.3px #a5a6ad;transform:scaleX(0.9435);">Extensions</span>
<span class="t" id="t13" style="left:57px;top:458.7px;font-size:13px;line-height:20px;color:#a5a6ad;-webkit-text-stroke:.3px #a5a6ad;transform:scaleX(0.9130);">Users</span>
<span class="t" id="t14" style="left:57px;top:502.7px;font-size:13px;line-height:20px;color:#a5a6ad;-webkit-text-stroke:.3px #a5a6ad;transform:scaleX(0.9514);">Referral</span>
<span class="t" id="t15" style="left:57px;top:546.7px;font-size:13px;line-height:20px;color:#a5a6ad;-webkit-text-stroke:.3px #a5a6ad;transform:scaleX(0.9658);">Cost Center</span>
<span class="t" id="t16" style="left:57px;top:590.7px;font-size:13px;line-height:20px;color:#a5a6ad;-webkit-text-stroke:.3px #a5a6ad;transform:scaleX(0.9790);">Settings</span>
<span class="t" id="t17" style="left:57px;top:634.7px;font-size:13px;line-height:20px;color:#a5a6ad;-webkit-text-stroke:.3px #a5a6ad;">Operation Logs</span>
<span class="t" id="t18" style="left:57px;top:678.7px;font-size:13px;line-height:20px;color:#a5a6ad;-webkit-text-stroke:.3px #a5a6ad;transform:scaleX(1.0093);">Help</span>
<span class="t" id="t19" style="left:264.5px;top:51.7px;font-size:14px;line-height:20px;color:#9a4b0e;-webkit-text-stroke:.2px #9a4b0e;transform:scaleX(0.9320);">Upgraded to version 7.1.0 — optimized fingerprints, added cloud phone profiles and fixed known issues</span>
<span class="t" id="t20" style="left:263.5px;top:106.7px;font-size:13px;line-height:20px;color:#a2a2a6;-webkit-text-stroke:.3px #a2a2a6;transform:scaleX(1.0155);">Add</span>
<span class="t" id="t21" style="left:339px;top:106.7px;font-size:13.5px;line-height:20px;color:#2b2b2b;transform:scaleX(0.9732);">Added</span>
<span class="t" id="t22" style="left:380px;top:106.7px;font-size:13.5px;line-height:20px;color:#1f3292;font-weight:bold;transform:scaleX(0.8981);">15</span>
<span class="t" id="t23" style="left:398.5px;top:106.7px;font-size:13.5px;line-height:20px;color:#2b2b2b;transform:scaleX(0.9075);">/ Total 50</span>
<span class="t" id="t24" style="left:461px;top:106.7px;font-size:13.5px;line-height:20px;color:#2b2b2b;transform:scaleX(0.9379);">Times</span>
<span class="t" id="t25" style="left:497px;top:106.7px;font-size:13.5px;line-height:20px;color:#1f3292;font-weight:bold;transform:scaleX(0.8649);">4</span>
<span class="t" id="t26" style="left:508px;top:106.7px;font-size:13.5px;line-height:20px;color:#2b2b2b;transform:scaleX(0.9775);">/ Total 5000</span>
<span class="t" id="t27" style="left:240px;top:168.2px;font-size:13px;line-height:20px;color:#a2a2a6;-webkit-text-stroke:.3px #a2a2a6;transform:scaleX(1.0724);">All</span>
<span class="t" id="t28" style="left:290px;top:168.2px;font-size:13px;line-height:20px;color:#454545;transform:scaleX(1.0111);">Mine</span>
<span class="t" id="t29" style="left:340px;top:168.2px;font-size:13px;line-height:20px;color:#454545;transform:scaleX(0.9943);">Opened</span>
<span class="t" id="t30" style="left:406px;top:168.2px;font-size:13px;line-height:20px;color:#454545;transform:scaleX(0.9221);">Share</span>
<span class="t" id="t31" style="left:458.5px;top:168.2px;font-size:13px;line-height:20px;color:#454545;transform:scaleX(0.9286);">Transfer</span>
<span class="t" id="t32" style="left:527.5px;top:168.2px;font-size:13px;line-height:20px;color:#1f3292;transform:scaleX(0.9101);">Tags</span>
<span class="t" id="t33" style="left:254px;top:214.2px;font-size:13.5px;line-height:20px;color:#343434;font-weight:bold;transform:scaleX(0.9085);">Seq</span>
<span class="t" id="t34" style="left:308.5px;top:214.2px;font-size:13.5px;line-height:20px;color:#343434;font-weight:bold;transform:scaleX(0.9630);">Sorting</span>
<span class="t" id="t35" style="left:409px;top:214.2px;font-size:13.5px;line-height:20px;color:#343434;font-weight:bold;transform:scaleX(0.9259);">Group</span>
<span class="t" id="t36" style="left:479px;top:214.2px;font-size:13.5px;line-height:20px;color:#343434;font-weight:bold;transform:scaleX(0.9924);">Name</span>
<span class="t" id="t37" style="left:569px;top:214.2px;font-size:13.5px;line-height:20px;color:#343434;font-weight:bold;transform:scaleX(0.9957);">Platform/...</span>
<span class="t" id="t38" style="left:514.5px;top:736.2px;font-size:13.5px;line-height:20px;color:#343434;transform:scaleX(0.9197);">15 Records</span>
<span class="t" id="t39" style="left:592px;top:736.2px;font-size:13.5px;line-height:20px;color:#343434;transform:scaleX(0.8649);">10 Records/Page</span>
<span class="t" id="t40" style="left:254px;top:269.7px;font-size:13px;line-height:20px;color:#2b2b2b;transform:scaleX(0.9676);">38</span>
<span class="t" id="t41" style="left:309px;top:268.7px;font-size:13px;line-height:20px;color:#2b2b2b;transform:scaleX(0.9676);">0</span>
<span class="t" id="t42" style="left:409px;top:268.7px;font-size:13px;line-height:20px;color:#7a7a7a;transform:scaleX(1.0046);">Ungroup<span style="color:#3c3c3c">...</span></span>
<span class="t" id="t43" style="left:479px;top:268.7px;font-size:13px;line-height:20px;color:#2b2b2b;transform:scaleX(0.9260);">ChatGPT 2</span>
<span class="t" id="t44" style="left:595px;top:268.7px;font-size:13px;line-height:20px;color:#2b2b2b;transform:scaleX(0.8707);">chatgpt.com</span>
<span class="t" id="t45" style="left:254px;top:328.9px;font-size:13px;line-height:20px;color:#2b2b2b;transform:scaleX(0.9676);">37</span>
<span class="t" id="t46" style="left:309px;top:327.9px;font-size:13px;line-height:20px;color:#2b2b2b;transform:scaleX(0.9676);">0</span>
<span class="t" id="t47" style="left:409px;top:327.9px;font-size:13px;line-height:20px;color:#7a7a7a;transform:scaleX(1.0046);">Ungroup<span style="color:#3c3c3c">...</span></span>
<span class="t" id="t48" style="left:479px;top:327.9px;font-size:13px;line-height:20px;color:#2b2b2b;transform:scaleX(0.9318);">JUNIA</span>
<span class="t" id="t49" style="left:595px;top:327.9px;font-size:13px;line-height:20px;color:#2b2b2b;transform:scaleX(0.9135);">junia.ai</span>
<span class="t" id="t50" style="left:254px;top:387.8px;font-size:13px;line-height:20px;color:#2b2b2b;transform:scaleX(0.9676);">36</span>
<span class="t" id="t51" style="left:309px;top:386.8px;font-size:13px;line-height:20px;color:#2b2b2b;transform:scaleX(0.9676);">0</span>
<span class="t" id="t52" style="left:409px;top:386.8px;font-size:13px;line-height:20px;color:#7a7a7a;transform:scaleX(1.0046);">Ungroup<span style="color:#3c3c3c">...</span></span>
<span class="t" id="t53" style="left:479px;top:386.8px;font-size:13px;line-height:20px;color:#2b2b2b;transform:scaleX(0.9227);">ChatGPT</span>
<span class="t" id="t54" style="left:595px;top:386.8px;font-size:13px;line-height:20px;color:#2b2b2b;transform:scaleX(0.8707);">chatgpt.com</span>
<span class="t" id="t55" style="left:254px;top:446.7px;font-size:13px;line-height:20px;color:#2b2b2b;transform:scaleX(0.9676);">35</span>
<span class="t" id="t56" style="left:309px;top:445.7px;font-size:13px;line-height:20px;color:#2b2b2b;transform:scaleX(0.9676);">0</span>
<span class="t" id="t57" style="left:409px;top:445.7px;font-size:13px;line-height:20px;color:#2b2b2b;transform:scaleX(0.9514);">General</span>
<span class="t" id="t58" style="left:479px;top:445.7px;font-size:13px;line-height:20px;color:#2b2b2b;transform:scaleX(0.9526);">YouTube 2</span>
<span class="t" id="t59" style="left:595px;top:445.7px;font-size:13px;line-height:20px;color:#2b2b2b;transform:scaleX(1.0530);">youtube.com</span>
<span class="t" id="t60" style="left:254px;top:504.4px;font-size:13px;line-height:20px;color:#2b2b2b;transform:scaleX(0.9676);">34</span>
<span class="t" id="t61" style="left:309px;top:503.4px;font-size:13px;line-height:20px;color:#2b2b2b;transform:scaleX(0.9676);">0</span>
<span class="t" id="t62" style="left:409px;top:503.4px;font-size:13px;line-height:20px;color:#2b2b2b;transform:scaleX(0.9514);">General</span>
<span class="t" id="t63" style="left:479px;top:503.4px;font-size:13px;line-height:20px;color:#2b2b2b;transform:scaleX(0.9364);">YouTube 1</span>
<span class="t" id="t64" style="left:595px;top:503.4px;font-size:13px;line-height:20px;color:#2b2b2b;transform:scaleX(1.0530);">youtube.com</span>
<span class="t" id="t65" style="left:254px;top:562.5px;font-size:13px;line-height:20px;color:#2b2b2b;transform:scaleX(0.9676);">29</span>
<span class="t" id="t66" style="left:309px;top:561.5px;font-size:13px;line-height:20px;color:#2b2b2b;transform:scaleX(0.9676);">0</span>
<span class="t" id="t67" style="left:409px;top:561.5px;font-size:13px;line-height:20px;color:#7a7a7a;transform:scaleX(1.0046);">Ungroup<span style="color:#3c3c3c">...</span></span>
<span class="t" id="t68" style="left:479px;top:561.5px;font-size:13px;line-height:20px;color:#2b2b2b;transform:scaleX(0.9722);">TamilMV 1</span>
<span class="t" id="t69" style="left:595px;top:561.5px;font-size:13px;line-height:20px;color:#2b2b2b;transform:scaleX(0.9514);">1tamilmv.com</span>
<span class="t" id="t70" style="left:254px;top:620.6px;font-size:13px;line-height:20px;color:#2b2b2b;transform:scaleX(0.9676);">28</span>
<span class="t" id="t71" style="left:309px;top:619.6px;font-size:13px;line-height:20px;color:#2b2b2b;transform:scaleX(0.9676);">0</span>
<span class="t" id="t72" style="left:409px;top:619.6px;font-size:13px;line-height:20px;color:#7a7a7a;transform:scaleX(1.0046);">Ungroup<span style="color:#3c3c3c">...</span></span>
<span class="t" id="t73" style="left:479px;top:619.6px;font-size:13px;line-height:20px;color:#2b2b2b;">WhatsApp2</span>
<span class="t" id="t74" style="left:595px;top:619.6px;font-size:13px;line-height:20px;color:#2b2b2b;transform:scaleX(0.9715);">whatsapp.com</span>
<span class="t" id="t75" style="left:254px;top:678.7px;font-size:13px;line-height:20px;color:#2b2b2b;transform:scaleX(0.9676);">27</span>
<span class="t" id="t76" style="left:309px;top:677.7px;font-size:13px;line-height:20px;color:#2b2b2b;transform:scaleX(0.9676);">0</span>
<span class="t" id="t77" style="left:409px;top:677.7px;font-size:13px;line-height:20px;color:#7a7a7a;transform:scaleX(1.0046);">Ungroup<span style="color:#3c3c3c">...</span></span>
<span class="t" id="t78" style="left:479px;top:677.7px;font-size:13px;line-height:20px;color:#2b2b2b;transform:scaleX(0.9887);">TamilMV 2</span>
<span class="t" id="t79" style="left:595px;top:677.7px;font-size:13px;line-height:20px;color:#2b2b2b;transform:scaleX(0.9514);">1tamilmv.com</span>
</div>
<div class="layer layer-top">
<span class="t" id="t0" style="left:35px;top:10.7px;font-size:14px;line-height:20px;color:#a3a3a8;transform:scaleX(0.9638);">BitBrowser 7.1.0</span>
<span class="t" id="t1" style="left:159px;top:10.7px;font-size:13px;line-height:20px;color:#a3a3a8;transform:scaleX(0.9745);">Line1</span>
<span class="t" id="t2" style="left:1135px;top:10.7px;font-size:13px;line-height:20px;color:#a3a3a8;transform:scaleX(0.9498);">English</span>
<span class="t" id="t80" style="left:649px;top:54.7px;font-size:15px;line-height:20px;color:#4d4d4d;font-weight:bold;white-space:pre;transform:scaleX(0.9921);">Update Profile  (Seq: 38)</span>
<span class="t" id="t81" style="left:833px;top:55.2px;font-size:13px;line-height:20px;color:#3d62ee;transform:scaleX(0.9794);">Copy ID</span>
<span class="t" id="t118" style="left:665px;top:741.2px;font-size:13px;line-height:20px;color:#fff;-webkit-text-stroke:.3px #fff;">Random Fingerprint</span>
<span class="t" id="t119" style="left:1127px;top:741.2px;font-size:13px;line-height:20px;color:#444;transform:scaleX(0.9390);">Cancel</span>
<span class="t" id="t120" style="left:1206.5px;top:741.2px;font-size:13px;line-height:20px;color:#fff;-webkit-text-stroke:.3px #fff;transform:scaleX(1.0326);">Confirm</span>
</div>
<div class="layer layer-drawer">
<span class="t" id="t82" style="left:681px;top:72.7px;font-size:13px;line-height:20px;color:#1f1f1f;transform:scaleX(0.9606);">Open URL</span>
<span class="t" id="t83" style="left:785px;top:63.8px;font-size:13px;line-height:20px;color:#707070;">2. Add multiple URLs, one on each line and all will open at once.</span>
<span class="t" id="t84" style="left:789px;top:84.2px;font-size:13px;line-height:20px;color:#707070;transform:scaleX(1.0330);">3. Click the "+" button on the right after entering all the URLs.</span>
<span class="t" id="t85" style="left:671.5px;top:167.2px;font-size:13px;line-height:20px;color:#2f54eb;font-weight:bold;transform:scaleX(0.9408);">Proxy</span>
<span class="t" id="t86" style="left:671.5px;top:195.7px;font-size:12px;line-height:20px;color:#f5484a;transform:scaleX(1.0702);">*</span>
<span class="t" id="t87" style="left:681px;top:194.2px;font-size:13px;line-height:20px;color:#1f1f1f;transform:scaleX(1.0375);">Method</span>
<span class="t" id="t88" style="left:797px;top:195.2px;font-size:13px;line-height:20px;color:#555;transform:scaleX(0.9822);">Custom</span>
<span class="t" id="t89" style="left:875px;top:195.2px;font-size:13px;line-height:20px;color:#555;transform:scaleX(0.9507);">Extract By API</span>
<span class="t" id="t90" style="left:988px;top:195.2px;font-size:13px;line-height:20px;color:#555;">Proxy Management</span>
<span class="t" id="t91" style="left:681px;top:241.7px;font-size:13px;line-height:20px;color:#1f1f1f;transform:scaleX(1.0081);">Lookup</span>
<span class="t" id="t92" style="left:681px;top:259.7px;font-size:13px;line-height:20px;color:#1f1f1f;transform:scaleX(0.9703);">Channel</span>
<span class="t" id="t93" style="left:777px;top:249.2px;font-size:13px;line-height:20px;color:#333;transform:scaleX(0.9518);">DB-IP</span>
<span class="t" id="t94" style="left:1136.5px;top:248.7px;font-size:13px;line-height:20px;color:#5f7df0;transform:scaleX(0.9498);">Check Proxy</span>
<span class="t" id="t95" style="left:671.5px;top:310.7px;font-size:12px;line-height:20px;color:#f5484a;transform:scaleX(1.0702);">*</span>
<span class="t" id="t96" style="left:681px;top:309.2px;font-size:13px;line-height:20px;color:#1f1f1f;transform:scaleX(0.9579);">Type</span>
<span class="t" id="t97" style="left:781.8px;top:308.3px;font-size:15.5px;line-height:20px;color:#fff;font-weight:bold;font-family:'Liberation Serif',serif;transform:scaleX(1.1014);">S</span>
<span class="t" id="t98" style="left:805px;top:309.2px;font-size:13px;line-height:20px;color:#333;transform:scaleX(0.9381);">Socks5</span>
<span class="t" id="t99" style="left:681px;top:358.2px;font-size:13px;line-height:20px;color:#1f1f1f;transform:scaleX(1.0062);">Protocol</span>
<span class="t" id="t100" style="left:797px;top:360.2px;font-size:13px;line-height:20px;color:#555;transform:scaleX(0.9610);">IPv4</span>
<span class="t" id="t101" style="left:855px;top:360.2px;font-size:13px;line-height:20px;color:#555;transform:scaleX(0.9610);">IPv6</span>
<span class="t" id="t102" style="left:671.5px;top:415.7px;font-size:12px;line-height:20px;color:#f5484a;transform:scaleX(1.0702);">*</span>
<span class="t" id="t103" style="left:681px;top:414.2px;font-size:13px;line-height:20px;color:#1f1f1f;transform:scaleX(1.0099);">Host</span>
<span class="t" id="t104" style="left:777px;top:414.2px;font-size:13px;line-height:20px;color:#767676;transform:scaleX(1.0059);">Host:Port:Username:Password will auto-split</span>
<span class="t" id="t105" style="left:671.5px;top:471.7px;font-size:12px;line-height:20px;color:#f5484a;transform:scaleX(1.0702);">*</span>
<span class="t" id="t106" style="left:681px;top:470.2px;font-size:13px;line-height:20px;color:#1f1f1f;transform:scaleX(1.0066);">Port</span>
<span class="t" id="t107" style="left:777px;top:470.2px;font-size:13px;line-height:20px;color:#767676;transform:scaleX(1.0099);">Please enter port</span>
<span class="t" id="t108" style="left:681px;top:526.2px;font-size:13px;line-height:20px;color:#1f1f1f;transform:scaleX(0.9672);">Username</span>
<span class="t" id="t109" style="left:777px;top:526.2px;font-size:13px;line-height:20px;color:#767676;transform:scaleX(1.0073);">Optional, please enter username</span>
<span class="t" id="t110" style="left:1058px;top:526.2px;font-size:13px;line-height:20px;color:#555;transform:scaleX(1.0272);">/200</span>
<span class="t" id="t111" style="left:681px;top:582.2px;font-size:13px;line-height:20px;color:#1f1f1f;transform:scaleX(0.9461);">Password</span>
<span class="t" id="t112" style="left:777px;top:582.2px;font-size:13px;line-height:20px;color:#767676;transform:scaleX(1.0083);">Optional, please enter password</span>
<span class="t" id="t113" style="left:1078px;top:582.2px;font-size:13px;line-height:20px;color:#555;transform:scaleX(1.0272);">/200</span>
<span class="t" id="t114" style="left:681px;top:638.2px;font-size:13px;line-height:20px;color:#1f1f1f;transform:scaleX(0.9469);">Refresh Proxy</span>
<span class="t" id="t115" style="left:777px;top:638.2px;font-size:13px;line-height:20px;color:#767676;transform:scaleX(0.9590);">Refresh Proxy</span>
<span class="t" id="t116" style="left:681px;top:686.7px;font-size:13px;line-height:20px;color:#1f1f1f;transform:scaleX(0.9106);">UDP</span>
<span class="t" id="t117" style="left:797px;top:689.2px;font-size:13px;line-height:20px;color:#555;transform:scaleX(0.9807);">UDP Protocol</span>
</div>
</div>
</body></html>
